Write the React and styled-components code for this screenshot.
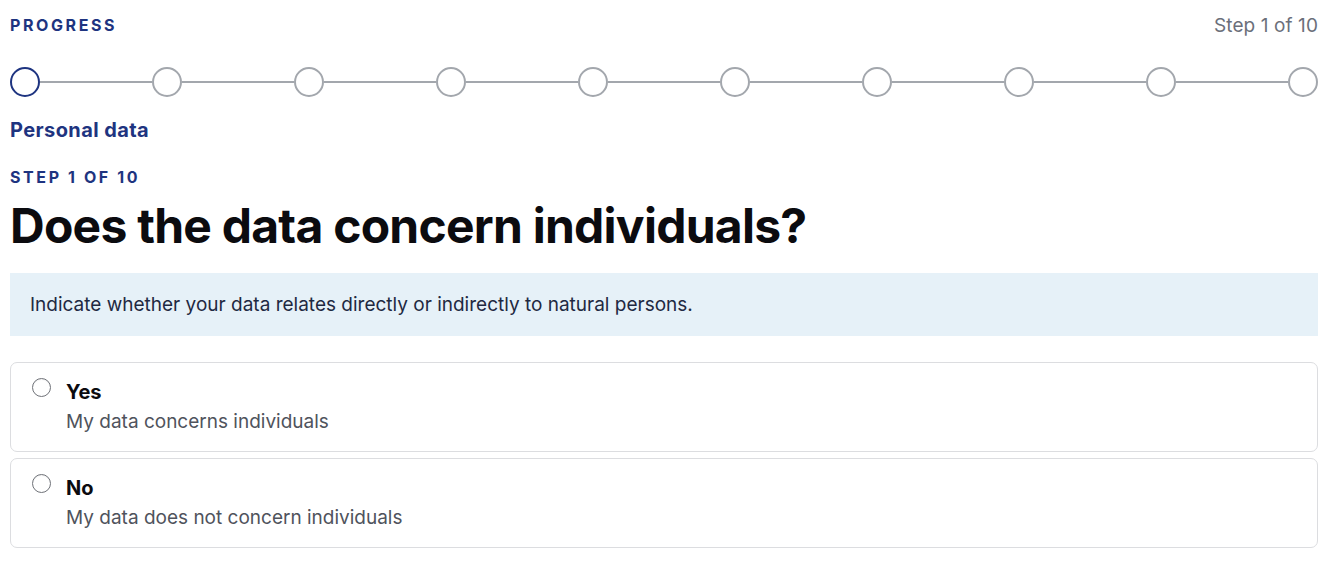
import React from "react";
import styled, { createGlobalStyle } from "styled-components";

const Global = createGlobalStyle`
  html, body { margin: 0; padding: 0; background: #fff; }
  body { font-family: Inter, "Noto Sans", sans-serif; -webkit-font-smoothing: antialiased; }
  * { box-sizing: border-box; }
`;

const Page = styled.div`
  padding: 14px 10px 10px 10px;
  display: flex;
  flex-direction: column;
`;

const TopRow = styled.div`
  display: flex;
  justify-content: space-between;
  align-items: center;
  height: 22px;
`;

const Eyebrow = styled.div`
  font-size: 16px;
  font-weight: 700;
  letter-spacing: 2.6px;
  color: #1e3480;
  text-transform: uppercase;
`;

const StepCount = styled.div`
  font-size: 19px;
  color: #6b6f7a;
  letter-spacing: 0.1px;
`;

const Track = styled.div`
  display: flex;
  align-items: center;
  margin-top: 31px;
  height: 30px;
`;

const Dot = styled.div`
  width: 30px;
  height: 30px;
  border-radius: 50%;
  border: 2px solid ${(p) => (p.active ? "#1e3480" : "#a3a7ad")};
  flex: none;
  background: #fff;
`;

const Line = styled.div`
  flex: 1;
  height: 2px;
  background: #a3a7ad;
`;

const StepName = styled.div`
  margin-top: 21px;
  font-size: 20px;
  font-weight: 700;
  color: #1e3480;
  letter-spacing: 0.4px;
`;

const StepLabel = styled(Eyebrow)`
  margin-top: 25px;
`;

const Title = styled.h1`
  margin: 11px 0 0 0;
  font-size: 48px;
  font-weight: 700;
  color: #0b0b0f;
  letter-spacing: -0.75px;
  line-height: 56px;
`;

const Info = styled.div`
  margin-top: 19px;
  background: #e6f1f8;
  padding: 0 20px;
  height: 63px;
  font-size: 19px;
  color: #1f2942;
  display: flex;
  align-items: center;
`;

const Options = styled.div`
  margin-top: 26px;
  display: flex;
  flex-direction: column;
  gap: 6px;
`;

const Card = styled.label`
  display: flex;
  align-items: flex-start;
  gap: 16px;
  border: 1px solid #dcdde0;
  border-radius: 7px;
  padding: 15px 20px 18px 21px;
  height: 90px;
  cursor: pointer;
`;

const Radio = styled.span`
  width: 19px;
  height: 19px;
  border-radius: 50%;
  border: 1px solid #6f7278;
  flex: none;
  box-shadow: inset 0 1px 1px rgba(0, 0, 0, 0.06);
`;

const Texts = styled.div`
  display: flex;
  flex-direction: column;
  gap: 6px;
  padding-top: 2px;
  margin-left: -1px;
`;

const OptTitle = styled.div`
  font-size: 20px;
  font-weight: 700;
  color: #0b0b0f;
`;

const OptDesc = styled.div`
  font-size: 19px;
  color: #4f535c;
`;

const options = [
  { t: "Yes", d: "My data concerns individuals" },
  { t: "No", d: "My data does not concern individuals" },
];

export default function App() {
  const dots = Array.from({ length: 10 });
  return (
    <>
      <Global />
      <Page>
        <TopRow>
          <Eyebrow>Progress</Eyebrow>
          <StepCount>Step 1 of 10</StepCount>
        </TopRow>
        <Track>
          {dots.map((_, i) => (
            <React.Fragment key={i}>
              {i > 0 && <Line />}
              <Dot active={i === 0} />
            </React.Fragment>
          ))}
        </Track>
        <StepName>Personal data</StepName>
        <StepLabel>Step 1 of 10</StepLabel>
        <Title>Does the data concern individuals?</Title>
        <Info>Indicate whether your data relates directly or indirectly to natural persons.</Info>
        <Options>
          {options.map((o) => (
            <Card key={o.t}>
              <Radio />
              <Texts>
                <OptTitle>{o.t}</OptTitle>
                <OptDesc>{o.d}</OptDesc>
              </Texts>
            </Card>
          ))}
        </Options>
      </Page>
    </>
  );
}
